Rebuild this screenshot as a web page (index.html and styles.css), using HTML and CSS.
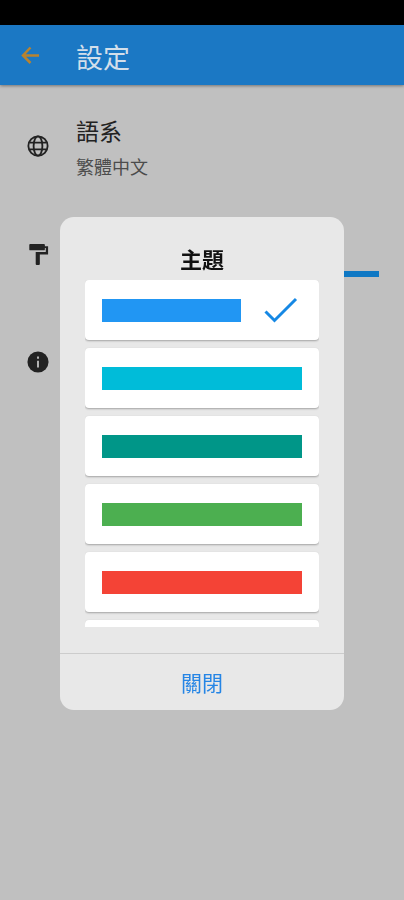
FILE: index.html
```
<!DOCTYPE html>
<html lang="zh-Hant">
<head>
<meta charset="utf-8">
<meta name="viewport" content="width=device-width, initial-scale=1">
<title>設定</title>
<link rel="stylesheet" href="styles.css">
</head>
<body>
<div class="status-bar"></div>
<header class="app-bar">
  <button class="back" type="button">
    <svg width="20" height="20" viewBox="0 0 20 20" aria-hidden="true"><path d="M19 10.500H3M10.500 2.500 3 10.500l7.500 7.500"/></svg>
  </button>
  <h1 class="app-title">設定</h1>
</header>
<main class="settings">
  <section class="row">
    <svg class="row-icon" viewBox="0 0 24 24" aria-hidden="true"><g fill="none" stroke="currentColor" stroke-width="2"><circle cx="12" cy="12" r="10.500"/><ellipse cx="12" cy="12" rx="4.800" ry="10.500"/><path d="M2.500 8.300h19M2.500 15.700h19"/></g></svg>
    <div class="row-body">
      <h2 class="row-title">語系</h2>
      <p class="row-value">繁體中文</p>
    </div>
  </section>
  <section class="row">
    <svg class="row-icon" viewBox="0 0 24 24" aria-hidden="true"><path fill="currentColor" d="M19.500 3.500V2c0-.6-.4-1-1-1h-15c-.6 0-1 .4-1 1v5c0 .6.400 1 1 1h15c.6 0 1-.4 1-1V5.500h1v4.300H9.500V23c0 .6.400 1 1 1h2.500c.6 0 1-.4 1-1V12.500h9v-9z"/></svg>
    <div class="row-body"><div class="theme-bar"></div></div>
  </section>
  <section class="row">
    <svg class="row-icon" viewBox="0 0 24 24" aria-hidden="true"><circle cx="12" cy="12" r="11.500" fill="currentColor"/><path fill="#c0c0c0" d="M11 6h2v2.500h-2zM11 10.500h2V18h-2z"/></svg>
  </section>
</main>
<div class="overlay">
  <div class="dialog" role="dialog" aria-modal="true" aria-labelledby="dialog-title">
    <h2 class="dialog-title" id="dialog-title">主題</h2>
    <div class="options">
      <button class="option" type="button" aria-pressed="true">
        <span class="swatch blue"></span>
        <svg class="check" viewBox="0 0 34 26" aria-hidden="true"><path d="M1.500 14.500 10.500 23.500 32 2"/></svg>
      </button>
      <button class="option" type="button" aria-pressed="false"><span class="swatch cyan"></span></button>
      <button class="option" type="button" aria-pressed="false"><span class="swatch teal"></span></button>
      <button class="option" type="button" aria-pressed="false"><span class="swatch green"></span></button>
      <button class="option" type="button" aria-pressed="false"><span class="swatch red"></span></button>
      <button class="option" type="button" aria-pressed="false"></button>
    </div>
    <button class="close" type="button">關閉</button>
  </div>
</div>
</body>
</html>
```
FILE: styles.css
```
* {
  box-sizing: border-box;
}

body {
  margin: 0;
  min-height: 100vh;
  background: #c0c0c0;
  color: #222;
  font-family: "Noto Sans CJK TC", sans-serif;
}

h1,
h2,
p {
  margin: 0;
  font-weight: 400;
}

button {
  border: 0;
  padding: 0;
  font-family: inherit;
}

.status-bar {
  height: 25px;
  background: #000;
}

.app-bar {
  display: flex;
  align-items: center;
  height: 60px;
  padding-left: 20px;
  background: #1b78c4;
  box-shadow: 0 1px 3px rgba(0, 0, 0, 0.4);
}

.back {
  display: flex;
  width: 56px;
  background: none;
}

.back svg {
  fill: none;
  stroke: #b9832f;
  stroke-width: 2.5;
}

.app-title {
  padding-top: 4px;
  color: #d3dfea;
  font-size: 27px;
  line-height: 40px;
}

.settings {
  padding-top: 7px;
}

.row {
  display: flex;
  align-items: center;
  gap: 27px;
  height: 108px;
  padding: 0 25px 0 27px;
}

.row-icon {
  flex: none;
  width: 22px;
  height: 22px;
}

.row-body {
  flex: 1;
}

.row-title {
  padding-top: 4px;
  font-size: 23px;
  line-height: 36px;
}

.row-value {
  color: #4c4c4c;
  font-size: 18px;
  line-height: 36px;
}

.theme-bar {
  height: 6px;
  margin-top: 40px;
  background: #0f78c4;
}

.overlay {
  position: fixed;
  inset: 27px 0 0;
  display: flex;
  align-items: center;
  justify-content: center;
  padding: 0 60px;
}

.dialog {
  width: 100%;
  overflow: hidden;
  border-radius: 14px;
  background: #e8e8e8;
}

.dialog-title {
  padding: 23px 0 4px;
  color: #111;
  font-size: 22px;
  font-weight: 700;
  line-height: 36px;
  text-align: center;
}

.options {
  display: flex;
  flex-direction: column;
  gap: 8px;
  height: 347px;
  margin: 0 25px 26px;
  overflow-y: auto;
  scrollbar-width: none;
}

.option {
  display: flex;
  flex: none;
  align-items: center;
  gap: 23px;
  height: 60px;
  padding: 0 17px;
  border-radius: 4px;
  background: #fff;
  box-shadow: 0 1px 2px rgba(0, 0, 0, 0.3);
}

.swatch {
  flex: 1;
  height: 23px;
}

.blue {
  background: #2196f3;
}

.cyan {
  background: #00bcd9;
}

.teal {
  background: #009688;
}

.green {
  background: #4caf50;
}

.red {
  background: #f44336;
}

.check {
  flex: none;
  width: 34px;
  height: 26px;
  margin-right: 4px;
  fill: none;
  stroke: #1688e4;
  stroke-width: 3;
}

.close {
  display: block;
  width: 100%;
  height: 57px;
  padding-bottom: 1px;
  border-top: 1px solid #ccc;
  background: none;
  color: #2585e5;
  font-size: 21px;
}
```
